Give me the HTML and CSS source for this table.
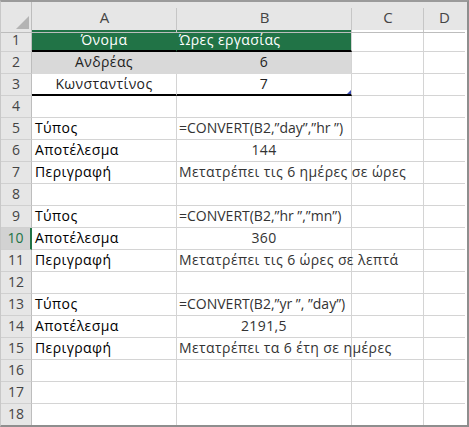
FILE: index.html
```html
<!DOCTYPE html>
<html lang="el">
<head>
    <meta charset="UTF-8">
    <title>CONVERT</title>
    <link rel="stylesheet" href="styles.css">
</head>
<body>
    <div class="sheet">
        <div class="row head">
            <div class="cell corner"><span class="corner-mark"></span></div>
            <div class="cell col">A</div>
            <div class="cell col">B</div>
            <div class="cell col">C</div>
            <div class="cell col">D</div>
        </div>
        <div class="row">
            <div class="cell num">1</div>
            <div class="cell center tbl-head join">Όνομα</div>
            <div class="cell tbl-head">Ώρες εργασίας</div>
            <div class="cell"></div>
            <div class="cell"></div>
        </div>
        <div class="row">
            <div class="cell num">2</div>
            <div class="cell center band join">Ανδρέας</div>
            <div class="cell center band">6</div>
            <div class="cell"></div>
            <div class="cell"></div>
        </div>
        <div class="row">
            <div class="cell num">3</div>
            <div class="cell center tbl-end">Κωνσταντίνος</div>
            <div class="cell center tbl-end resize">7</div>
            <div class="cell"></div>
            <div class="cell"></div>
        </div>
        <div class="row">
            <div class="cell num">4</div>
            <div class="cell"></div>
            <div class="cell"></div>
            <div class="cell"></div>
            <div class="cell"></div>
        </div>
        <div class="row">
            <div class="cell num">5</div>
            <div class="cell label">Τύπος</div>
            <div class="cell value formula">=CONVERT(B2,”day”,”hr ”)</div>
            <div class="cell"></div>
            <div class="cell"></div>
        </div>
        <div class="row">
            <div class="cell num">6</div>
            <div class="cell label">Αποτέλεσμα</div>
            <div class="cell value center">144</div>
            <div class="cell"></div>
            <div class="cell"></div>
        </div>
        <div class="row">
            <div class="cell num">7</div>
            <div class="cell label">Περιγραφή</div>
            <div class="cell value overflow">Μετατρέπει τις 6 ημέρες σε ώρες</div>
            <div class="cell"></div>
            <div class="cell"></div>
        </div>
        <div class="row">
            <div class="cell num">8</div>
            <div class="cell"></div>
            <div class="cell"></div>
            <div class="cell"></div>
            <div class="cell"></div>
        </div>
        <div class="row">
            <div class="cell num">9</div>
            <div class="cell label">Τύπος</div>
            <div class="cell value formula">=CONVERT(B2,”hr ”,”mn”)</div>
            <div class="cell"></div>
            <div class="cell"></div>
        </div>
        <div class="row">
            <div class="cell num selected">10</div>
            <div class="cell label">Αποτέλεσμα</div>
            <div class="cell value center">360</div>
            <div class="cell"></div>
            <div class="cell"></div>
        </div>
        <div class="row">
            <div class="cell num">11</div>
            <div class="cell label">Περιγραφή</div>
            <div class="cell value overflow">Μετατρέπει τις 6 ώρες σε λεπτά</div>
            <div class="cell"></div>
            <div class="cell"></div>
        </div>
        <div class="row">
            <div class="cell num">12</div>
            <div class="cell"></div>
            <div class="cell"></div>
            <div class="cell"></div>
            <div class="cell"></div>
        </div>
        <div class="row">
            <div class="cell num">13</div>
            <div class="cell label">Τύπος</div>
            <div class="cell value formula">=CONVERT(B2,”yr ”, ”day”)</div>
            <div class="cell"></div>
            <div class="cell"></div>
        </div>
        <div class="row">
            <div class="cell num">14</div>
            <div class="cell label">Αποτέλεσμα</div>
            <div class="cell value center">2191,5</div>
            <div class="cell"></div>
            <div class="cell"></div>
        </div>
        <div class="row">
            <div class="cell num">15</div>
            <div class="cell label">Περιγραφή</div>
            <div class="cell value overflow">Μετατρέπει τα 6 έτη σε ημέρες</div>
            <div class="cell"></div>
            <div class="cell"></div>
        </div>
        <div class="row">
            <div class="cell num">16</div>
            <div class="cell"></div>
            <div class="cell"></div>
            <div class="cell"></div>
            <div class="cell"></div>
        </div>
        <div class="row">
            <div class="cell num">17</div>
            <div class="cell"></div>
            <div class="cell"></div>
            <div class="cell"></div>
            <div class="cell"></div>
        </div>
        <div class="row">
            <div class="cell num">18</div>
            <div class="cell"></div>
            <div class="cell"></div>
            <div class="cell"></div>
            <div class="cell"></div>
        </div>
    </div>
</body>
</html>
```

FILE: styles.css
```css
body {
    margin: 0;
    padding: 0;
    background-color: #ffffff;
    font-family: "Open Sans", "Liberation Sans", sans-serif;
}
.sheet {
    width: 469px;
    height: 427px;
    box-sizing: border-box;
    border-top: 2px solid #9b9b9b;
    border-left: 1px solid #c8c8c8;
    border-right: 2px solid #8e8e8e;
    border-bottom: 2px solid #8e8e8e;
    overflow: hidden;
}
.row {
    display: grid;
    grid-template-columns: 31px 145px 175px 72px 41px;
    height: 22px;
}
.row:last-child {
    height: 21px;
}
.cell {
    box-sizing: border-box;
    border-right: 1px solid #d4d4d4;
    border-bottom: 1px solid #d4d4d4;
    font-size: 14px;
    letter-spacing: 0.4px;
    line-height: 20px;
    padding: 0 3px;
    white-space: nowrap;
    color: #222;
}
.row .cell:last-child {
    border-right: none;
}
.row:last-child .cell {
    border-bottom: none;
}
.head {
    height: 28px;
    background-color: #e6e6e6;
}
.head .cell {
    border-bottom: 1px solid #bdbdbd;
    border-right: none;
    position: relative;
    text-align: center;
    font-size: 15px;
    letter-spacing: 0;
    line-height: 30px;
    color: #444;
}
.head .cell::after {
    content: "";
    position: absolute;
    right: 0;
    top: 6px;
    bottom: 0;
    width: 1px;
    background-color: #c6c6c6;
}
.head .cell:last-child::after {
    display: none;
}
.corner {
    position: relative;
}
.head .corner::after {
    top: 0;
    background-color: #bdbdbd;
}
.corner-mark {
    position: absolute;
    right: 3px;
    bottom: 3px;
    width: 0;
    height: 0;
    border-left: 13px solid transparent;
    border-bottom: 13px solid #b4b4b4;
}
.num {
    background-color: #e6e6e6;
    border-right-color: #bdbdbd;
    border-bottom-color: #d0d0d0;
    text-align: center;
    color: #444;
    letter-spacing: 0;
    padding: 0;
}
.num.selected {
    background-color: #d2d2d2;
    border-right: 2px solid #217346;
    color: #217346;
}
.center {
    text-align: center;
}
.tbl-head {
    background-color: #217346;
    color: #ffffff;
    border-bottom: 2px solid #000;
    line-height: 19px;
    padding-left: 2px;
}
.band {
    background-color: #d9d9d9;
    border-bottom-color: #d9d9d9;
}
.join {
    border-right-color: transparent;
}
.tbl-head.join {
    border-right-color: #217346;
    padding-left: 3px;
}
.band.join {
    border-right-color: #d9d9d9;
}
.tbl-end {
    border-bottom: 2px solid #000;
    line-height: 19px;
}
.resize {
    position: relative;
}
.resize::after {
    content: "";
    position: absolute;
    right: 0;
    bottom: 0;
    width: 0;
    height: 0;
    border-left: 4px solid transparent;
    border-bottom: 4px solid #3c4fb6;
}
.label {
    color: #000;
}
.value {
    color: #333;
    padding-left: 2px;
}
.value.center {
    padding-left: 3px;
}
.formula {
    letter-spacing: 0;
}
.overflow {
    overflow: visible;
    position: relative;
    z-index: 1;
}
```
